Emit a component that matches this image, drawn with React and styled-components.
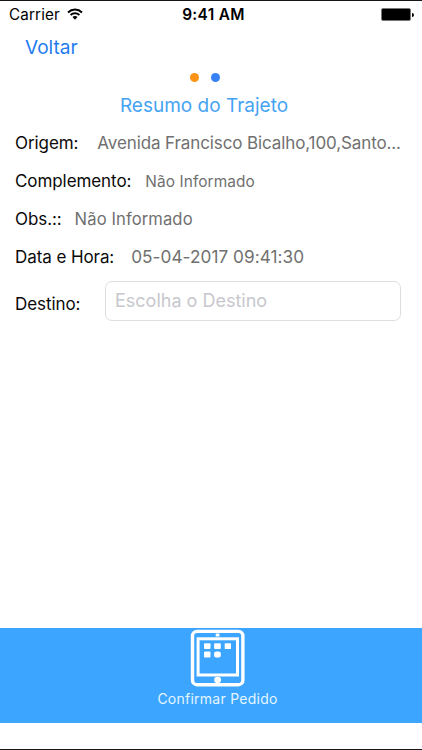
import styled, { createGlobalStyle } from "styled-components";

const fields = [
  { label: "Origem:", value: "Avenida Francisco Bicalho,100,Santo...", gap: 19, size: 17, spacing: -0.11 },
  { label: "Complemento:", value: "Não Informado", gap: 14, size: 15.4, spacing: 0.1 },
  { label: "Obs.::", value: "Não Informado", gap: 13, size: 16.6, spacing: 0.1 },
  { label: "Data e Hora:", value: "05-04-2017 09:41:30", gap: 17, size: 17.2, spacing: 0.05 },
];

const App = () => {
  return (
    <>
      <GlobalStyle />
      <Screen>
        <StatusBar>
          <Carrier>
            <span>Carrier</span>
            <WifiIcon viewBox="0 0 16 12">
              <path d="M1 4.4 A10.2 10.2 0 0 1 15 4.4" />
              <path d="M3.6 7.1 A6.4 6.4 0 0 1 12.4 7.1" />
              <path className="dot" d="M5.5 9.1 A3.4 3.4 0 0 1 10.5 9.1 L8 11.7 Z" />
            </WifiIcon>
          </Carrier>
          <Clock>9:41 AM</Clock>
          <Battery>
            <span />
            <span />
          </Battery>
        </StatusBar>
        <NavBar>
          <BackButton>Voltar</BackButton>
        </NavBar>
        <Dots>
          <Dot $color="#fd9418" />
          <Dot $color="#3682f4" />
        </Dots>
        <Title>Resumo do Trajeto</Title>
        <Details>
          {fields.map((field) => (
            <Row key={field.label}>
              <Label>{field.label}</Label>
              <Value $gap={field.gap} $size={field.size} $spacing={field.spacing}>
                {field.value}
              </Value>
            </Row>
          ))}
          <InputRow>
            <Label>Destino:</Label>
            <Input placeholder="Escolha o Destino" />
          </InputRow>
        </Details>
        <ConfirmButton>
          <TabletIcon viewBox="0 0 55 58">
            <rect x="2.5" y="2.4" width="50.4" height="53.3" rx="4.5" strokeWidth="3.4" />
            <rect x="8.1" y="9.8" width="39.4" height="36.2" strokeWidth="3" />
            <g className="solid">
              <rect x="25.7" y="4.6" width="3.8" height="2.8" rx="0.5" />
              <rect x="14" y="14.2" width="6.5" height="5.8" rx="1" />
              <rect x="24.1" y="14.2" width="6.7" height="5.8" rx="1" />
              <rect x="34.7" y="14.2" width="6.3" height="5.8" rx="0.5" />
              <rect x="14" y="22.6" width="6.5" height="5.8" rx="1" />
              <rect x="24.1" y="22.6" width="6.7" height="5.8" rx="2" />
              <ellipse cx="27.6" cy="50.9" rx="3.5" ry="3.1" />
            </g>
          </TabletIcon>
          <span>Confirmar Pedido</span>
        </ConfirmButton>
      </Screen>
    </>
  );
};

const GlobalStyle = createGlobalStyle`
  * {
    box-sizing: border-box;
  }

  body {
    margin: 0;
    background: #fff;
    font-family: Inter, "Liberation Sans", sans-serif;
  }
`;

const Screen = styled.div`
  width: 422px;
  height: 750px;
  display: flex;
  flex-direction: column;
  overflow: hidden;
  background: #fff;
  border-top: 1px solid #161618;
  border-bottom: 1px solid #161618;
`;

const StatusBar = styled.header`
  height: 27px;
  flex: none;
  display: grid;
  grid-template-columns: 1fr auto 1fr;
  align-items: center;
  padding: 0 8px 0 9px;
  color: #000;
`;

const Carrier = styled.div`
  display: flex;
  align-items: center;
  gap: 7px;
  font-size: 15.2px;
  letter-spacing: 0.15px;
`;

const WifiIcon = styled.svg`
  width: 16px;
  height: 12px;
  margin-top: -2px;
  fill: none;
  stroke: #000;
  stroke-width: 2;

  .dot {
    fill: #000;
    stroke: none;
  }
`;

const Clock = styled.div`
  padding-left: 4px;
  font-size: 15.4px;
  font-weight: 600;
  letter-spacing: 0.35px;
`;

const Battery = styled.div`
  justify-self: end;
  display: flex;
  align-items: center;
  gap: 1px;

  span:first-child {
    width: 30px;
    height: 13px;
    background: #000;
    border: 1px solid #777;
    border-radius: 2px;
  }

  span:last-child {
    width: 2px;
    height: 4px;
    background: #000;
    border-radius: 0 2px 2px 0;
  }
`;

const NavBar = styled.nav`
  height: 40px;
  flex: none;
  padding: 8px 25px 0;
`;

const BackButton = styled.button`
  display: block;
  padding: 0;
  border: none;
  background: none;
  color: #1f7df0;
  font: inherit;
  font-size: 19px;
  line-height: 24px;
  cursor: pointer;
`;

const Dots = styled.div`
  flex: none;
  display: flex;
  gap: 12px;
  padding: 5px 0 0 190px;
`;

const Dot = styled.span`
  width: 9px;
  height: 9px;
  border-radius: 50%;
  background: ${(props) => props.$color};
`;

const Title = styled.h1`
  flex: none;
  margin: 12px 0 0 -14px;
  color: #46a3f3;
  font-size: 19px;
  font-weight: 400;
  line-height: 24px;
  text-align: center;
`;

const Details = styled.main`
  flex: 1;
  padding: 6px 21px 0 15px;
`;

const Row = styled.div`
  height: 38px;
  display: flex;
  align-items: baseline;
  padding-top: 8px;
  line-height: 22px;
  white-space: nowrap;
`;

const Label = styled.span`
  color: #0a0a0a;
  font-size: 17px;
  letter-spacing: -0.08px;
`;

const Value = styled.span`
  margin-left: ${(props) => props.$gap}px;
  color: #707070;
  font-size: ${(props) => props.$size}px;
  letter-spacing: ${(props) => props.$spacing}px;
`;

const InputRow = styled(Row)`
  height: 56px;
  align-items: center;
  justify-content: space-between;
  padding-top: 0;
`;

const Input = styled.input`
  width: 296px;
  height: 40px;
  margin-bottom: 7px;
  padding: 0 9px;
  border: 1px solid #dedee0;
  border-radius: 7px;
  outline: none;
  background: #fff;
  color: #000;
  font: inherit;
  font-size: 18px;

  &::placeholder {
    color: #c7c7cd;
    opacity: 1;
  }
`;

const ConfirmButton = styled.button`
  height: 95px;
  flex: none;
  display: flex;
  flex-direction: column;
  align-items: center;
  margin: 0 0 26px;
  padding: 1px 0 0 13px;
  border: none;
  background: #3ba5ff;
  color: #e4f6ff;
  font: inherit;
  font-size: 14px;
  line-height: 18px;
  letter-spacing: 0.25px;
  cursor: pointer;

  span {
    margin-top: 3px;
  }
`;

const TabletIcon = styled.svg`
  width: 55px;
  height: 58px;
  flex: none;
  fill: none;
  stroke: #fff;

  .solid {
    fill: #fff;
    stroke: none;
  }
`;

export default App;
